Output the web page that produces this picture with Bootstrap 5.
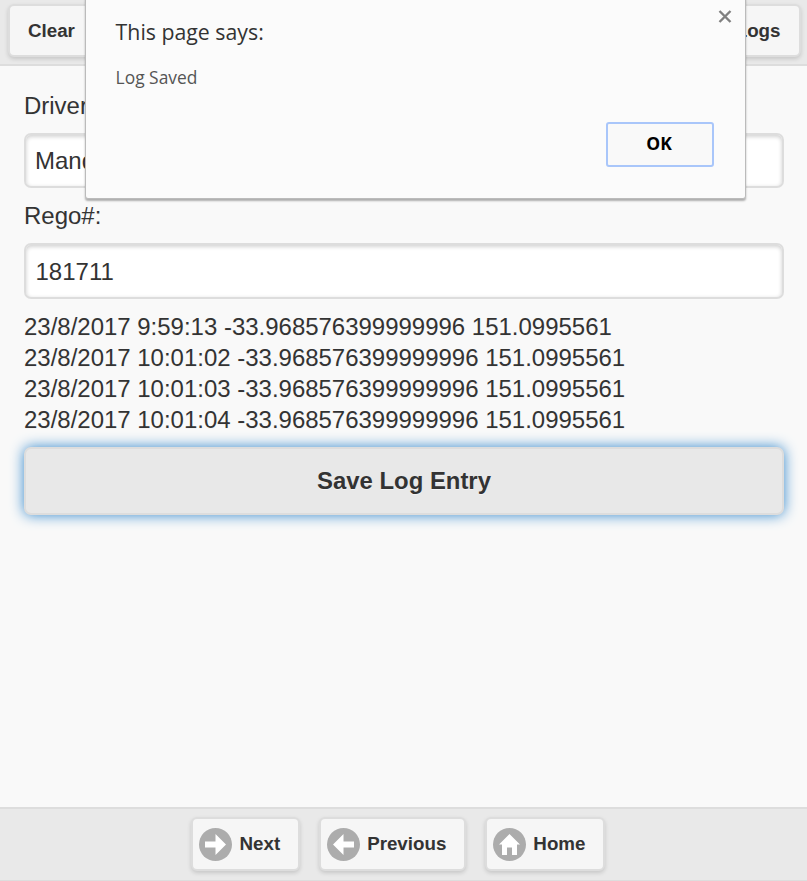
<!DOCTYPE html>
<html lang="en">
<head>
<meta charset="utf-8">
<meta name="viewport" content="width=device-width, initial-scale=1">
<title>Driver Log</title>
<link href="https://cdn.jsdelivr.net/npm/bootstrap@5.3.0/dist/css/bootstrap.min.css" rel="stylesheet">
<style>
body { font-family: "Liberation Sans", Arial, sans-serif; font-size: 23.97px; line-height: 31px; color: #333; background: #f9f9f9; text-shadow: 0 1px 0 #f3f3f3; }
.bar { background: #e9e9e9; border: 0 solid #ddd; }
.bar-top { height: 66px; border-bottom-width: 2px; padding: 4px 6px 0 8px; }
.bar-bottom { height: 74px; border-width: 2px 0 1px; padding: 8px 0 0 191px; gap: 19px; }
.tool-btn { font-size: 18.75px; font-weight: 700; line-height: 24px; color: #333; background: #f6f6f6; border: 2px solid #ddd; border-radius: 6px; box-shadow: 0 2px 4px rgba(0,0,0,.15); height: 53px; text-shadow: 0 1px 0 #f3f3f3; }
.bar-top .tool-btn { padding: 12px 18px; }
.bar-top .tool-btn:last-child { padding-right: 18.5px; }
.bar-bottom .tool-btn { height: 54px; padding: 0 17.5px 0 6px; }
.tool-btn svg { width: 33px; height: 33px; margin-right: 7.5px; }
.log-main { padding: 24px 23px 0 24px; }
.log-main > label { margin-bottom: 12px; }
.log-main > .second-label { margin-top: 12px; }
.log-list { margin: 12px 0 12px; }
.log-input { height: 55px; font-size: 24px; color: #333; background: #fff; border: 2px solid #ddd; border-radius: 7px; padding: 0 9px; box-shadow: inset 0 1.5px 4px rgba(0,0,0,.2); }
.rego-input { height: 56px; padding: 2px 9px 0 9.5px; }
.save-btn { height: 68px; font-size: 23.9px; font-weight: 700; color: #333; background: #e8e8e8; border: 2px solid #ddd; border-radius: 7px; box-shadow: 0 0 14px #38c; text-shadow: 0 1px 0 #f3f3f3; }
.alert-box { top: -4px; left: 85px; width: 661px; height: 203px; background: #fbfbfb; border: 1px solid #bbb; border-radius: 3px; box-shadow: 0 2px 2px rgba(0,0,0,.3); font-family: "Open Sans", "Noto Sans", sans-serif; text-shadow: none; padding: 20px 31px 31px 29.6px; }
.alert-head { font-size: 21.3px; line-height: 30px; color: #333; }
.alert-text { font-size: 17.4px; line-height: 24px; color: #555; margin-top: 18px; }
.ok-btn { width: 108px; height: 45px; background: #f9f9f9; border: 2px solid #a9c6fa; border-radius: 3px; color: #000; font-size: 17.5px; line-height: 24px; font-weight: 700; padding: 0 2px 4px 0; }
.close-x { top: 13px; right: 13px; width: 14px; height: 13px; }
</style>
<script src="https://cdn.jsdelivr.net/npm/bootstrap@5.3.0/dist/js/bootstrap.bundle.min.js"></script>
</head>
<body>
<div class="d-flex flex-column vh-100 position-relative overflow-hidden">
  <header class="bar bar-top d-flex justify-content-between align-items-start flex-shrink-0">
    <button class="btn tool-btn"><span>Clear</span></button>
    <button class="btn tool-btn"><span>Logs</span></button>
  </header>

  <main class="log-main flex-grow-1">
    <label class="d-block" for="driver">Driver:</label>
    <input class="form-control log-input" id="driver" value="Mand">
    <label class="d-block second-label" for="rego">Rego#:</label>
    <input class="form-control log-input rego-input" id="rego" value="181711">
    <div class="log-list">
      <div>23/8/2017 9:59:13 -33.968576399999996 151.0995561</div>
      <div>23/8/2017 10:01:02 -33.968576399999996 151.0995561</div>
      <div>23/8/2017 10:01:03 -33.968576399999996 151.0995561</div>
      <div>23/8/2017 10:01:04 -33.968576399999996 151.0995561</div>
    </div>
    <button class="btn save-btn w-100">Save Log Entry</button>
  </main>

  <footer class="bar bar-bottom d-flex align-items-start flex-shrink-0">
    <button class="btn tool-btn d-flex align-items-center">
      <svg viewBox="0 0 33 33"><circle cx="16.5" cy="16.5" r="16.5" fill="#acacac"/><path fill="#fff" d="M16.5 6 27 16.5 16.5 27v-7.5H6v-6h10.5z"/></svg><span>Next</span>
    </button>
    <button class="btn tool-btn d-flex align-items-center">
      <svg viewBox="0 0 33 33"><circle cx="16.5" cy="16.5" r="16.5" fill="#acacac"/><path fill="#fff" d="M16.5 6 6 16.5 16.5 27v-7.5H27v-6H16.5z"/></svg><span>Previous</span>
    </button>
    <button class="btn tool-btn d-flex align-items-center">
      <svg viewBox="0 0 33 33"><circle cx="16.5" cy="16.5" r="16.5" fill="#acacac"/><path fill="#fff" d="M16.5 6 27 16.5H24V27h-5v-7.5h-5V27H9V16.5H6z"/></svg><span>Home</span>
    </button>
  </footer>

  <div class="alert-box position-absolute d-flex flex-column" role="alertdialog">
    <svg class="close-x position-absolute" viewBox="0 0 14 13"><path d="M1.500 1 12.500 12M12.500 1 1.500 12" stroke="#808080" stroke-width="2.4" fill="none"/></svg>
    <div class="alert-head">This page says:</div>
    <div class="alert-text">Log Saved</div>
    <button class="btn ok-btn mt-auto ms-auto">OK</button>
  </div>
</div>
</body>
</html>
